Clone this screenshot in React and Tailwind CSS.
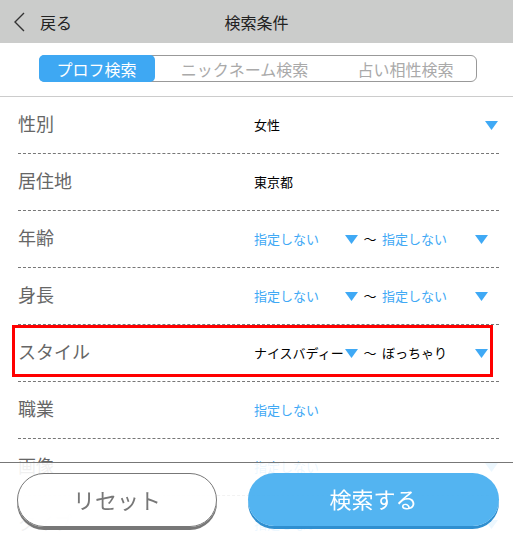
import React from "react";

const font = { fontFamily: '"Noto Sans CJK JP", "Noto Sans", sans-serif' };

const Tri = ({ className = "" }) => (
  <svg width="13" height="9" viewBox="0 0 13 9" className={className}>
    <polygon points="0,0 13,0 6.5,9" fill="#3fa9f5" />
  </svg>
);

const Val = ({ text, blue }) => (
  <span className={`text-[13px] whitespace-nowrap ${blue ? "text-[#3fa9f5]" : "text-black"}`}>{text}</span>
);

const Single = ({ text, blue, arrow = true }) => (
  <div className="flex items-center w-[244px] justify-between">
    <Val text={text} blue={blue} />
    {arrow && <Tri />}
  </div>
);

const Range = ({ a, b, blue }) => (
  <div className="flex items-center">
    <div className="flex items-center justify-between w-[104px]">
      <Val text={a} blue={blue} />
      <Tri />
    </div>
    <span className="text-[13px] text-black w-[24px] text-center">～</span>
    <div className="flex items-center justify-between w-[106px]">
      <Val text={b} blue={blue} />
      <Tri />
    </div>
  </div>
);

const Row = ({ label, children, highlight }) => (
  <div className="relative flex items-center h-[57px] ml-[18px] mr-[14px] border-b border-dashed border-[#777]">
    {highlight && (
      <div className="absolute left-[-6px] right-[6px] top-0 bottom-[4px] border-[3px] border-[#ff0000]" />
    )}
    <div className="w-[236px] text-[18px] text-[#666] pb-[3px]">{label}</div>
    {children}
  </div>
);

export default function App() {
  return (
    <div className="min-h-screen bg-white" style={font}>
      <div className="h-[43px] bg-[#cbcccb] flex items-center relative">
        <div className="flex items-center pl-[13px]">
          <svg width="13" height="20" viewBox="0 0 13 20">
            <polyline points="11,1 2,10 11,19" fill="none" stroke="#333" strokeWidth="1.4" />
          </svg>
          <span className="ml-[14px] text-[16px] text-[#222]">戻る</span>
        </div>
        <div className="absolute left-0 right-0 text-center text-[16px] text-[#222] pointer-events-none">検索条件</div>
      </div>

      <div className="h-[54px] flex items-center justify-center border-b border-[#ccc] pl-[2px]">
        <div className="flex h-[27px] w-[438px] border border-[#999] rounded-[6px] text-[16px] mt-[-2px]">
          <div className="w-[116px] bg-[#3ea8f3] text-white rounded-[5px] flex items-center justify-center -m-px">プロフ検索</div>
          <div className="w-[182px] text-[#aaa] flex items-center justify-center">ニックネーム検索</div>
          <div className="flex-1 text-[#aaa] flex items-center justify-center">占い相性検索</div>
        </div>
      </div>

      <Row label="性別"><Single text="女性" /></Row>
      <Row label="居住地"><Single text="東京都" arrow={false} /></Row>
      <Row label="年齢"><Range a="指定しない" b="指定しない" blue /></Row>
      <Row label="身長"><Range a="指定しない" b="指定しない" blue /></Row>
      <Row label="スタイル" highlight><Range a="ナイスバディー" b="ぼっちゃり" /></Row>
      <Row label="職業"><Single text="指定しない" blue arrow={false} /></Row>
      <Row label="画像"><Single text="指定しない" blue /></Row>
      <Row label="タイプ"><Single text="指定しない" blue /></Row>
      <Row label="年収"><Single text="指定しない" blue /></Row>

      <div className="fixed left-0 right-0 bottom-0 h-[72px] bg-white/90 border-t border-[#777] flex items-start pt-[10px] pl-[17px] pr-[14px] gap-[31px]">
        <button className="w-[200px] h-[54px] rounded-full bg-white/90 border border-[#777] shadow-[0_3px_0_#777] text-[22px] text-[#777] flex items-center justify-center pb-[2px]">
          リセット
        </button>
        <button className="flex-1 h-[53px] rounded-full bg-[#4ab0f0]/95 shadow-[0_3px_0_#2f8fd0] text-[22px] text-white flex items-center justify-center pb-[2px]">
          検索する
        </button>
      </div>
    </div>
  );
}
